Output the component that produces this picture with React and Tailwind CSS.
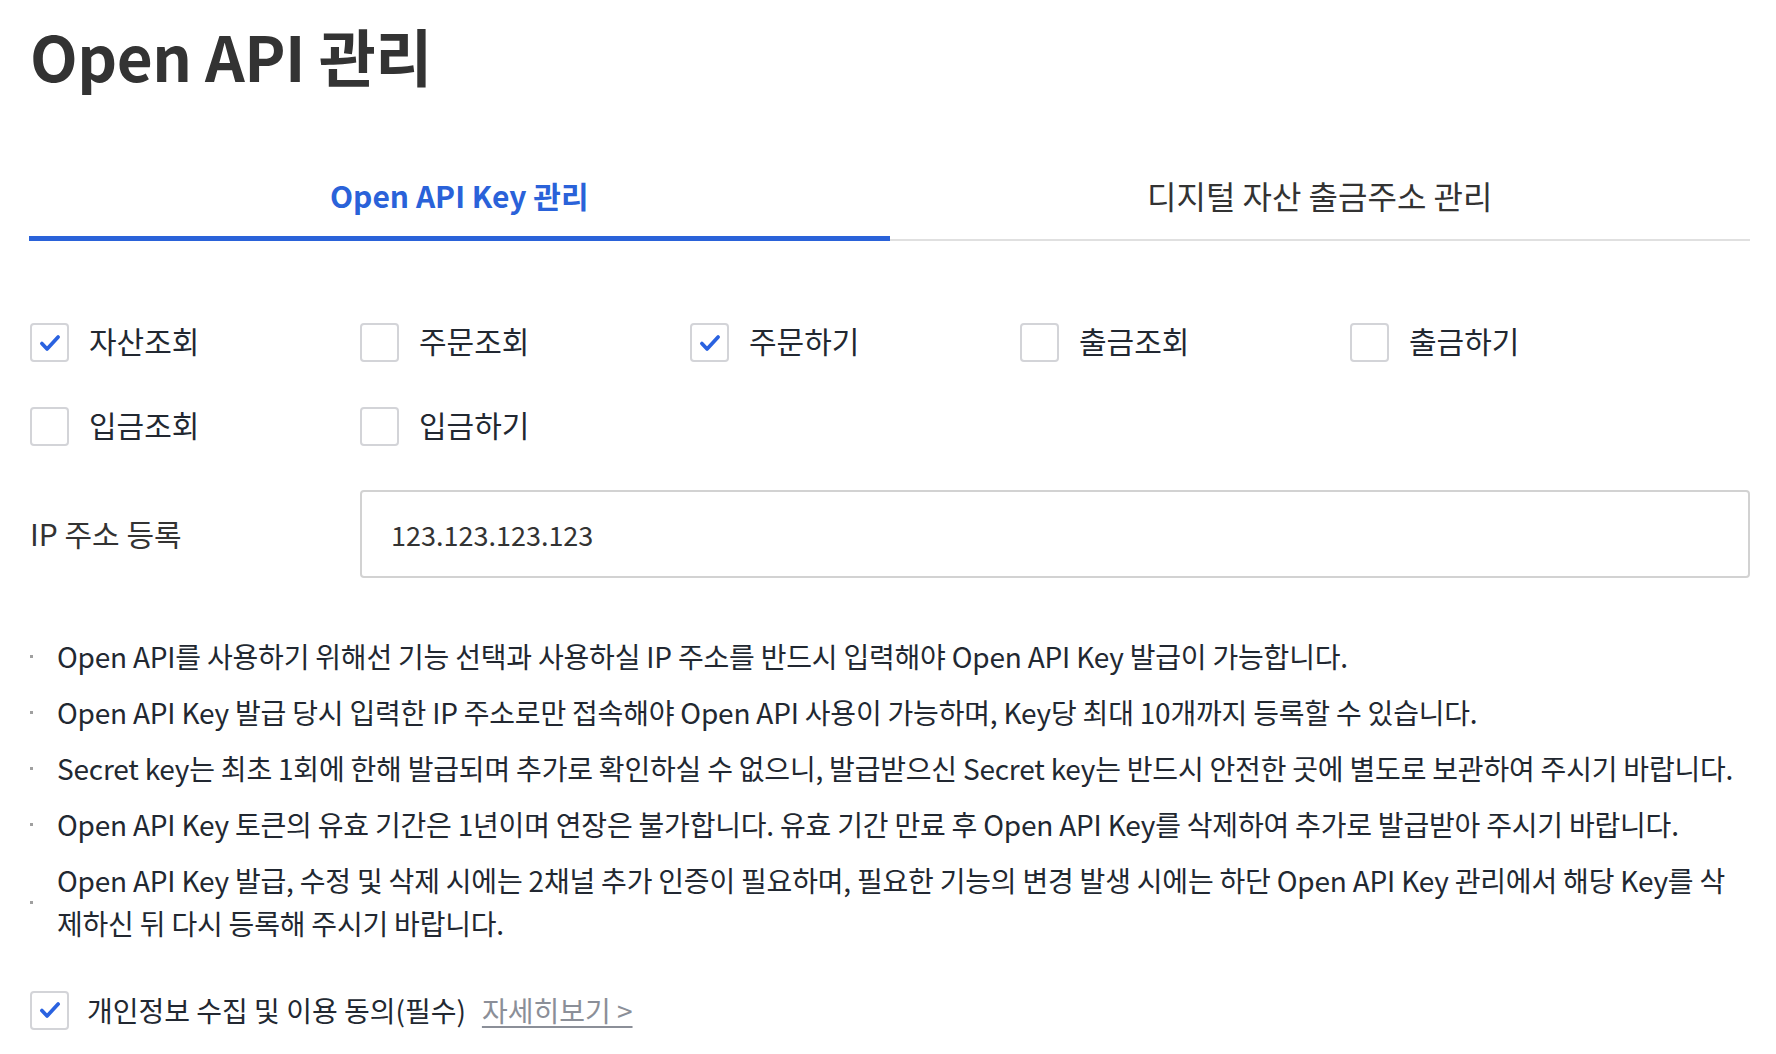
import React, { useState } from 'react';

const FONT = { fontFamily: '"Noto Sans CJK KR", "Noto Sans", sans-serif' };

const Checkbox = ({ checked, onClick }) => (
  <button
    type="button"
    onClick={onClick}
    className="w-[39px] h-[39px] shrink-0 rounded-[4px] border-2 border-[#d3d4d8] bg-white flex items-center justify-center"
  >
    {checked && (
      <svg width="26" height="26" viewBox="0 0 24 24" fill="none">
        <path d="M4.5 12.5l4.8 5L19.5 6.5" stroke="#2a62e0" strokeWidth="3.4" strokeLinecap="round" strokeLinejoin="round" />
      </svg>
    )}
  </button>
);

const permissions = ['자산조회', '주문조회', '주문하기', '출금조회', '출금하기', '입금조회', '입금하기'];

const notes = [
  'Open API를 사용하기 위해선 기능 선택과 사용하실 IP 주소를 반드시 입력해야 Open API Key 발급이 가능합니다.',
  'Open API Key 발급 당시 입력한 IP 주소로만 접속해야 Open API 사용이 가능하며, Key당 최대 10개까지 등록할 수 있습니다.',
  'Secret key는 최초 1회에 한해 발급되며 추가로 확인하실 수 없으니, 발급받으신 Secret key는 반드시 안전한 곳에 별도로 보관하여 주시기 바랍니다.',
  'Open API Key 토큰의 유효 기간은 1년이며 연장은 불가합니다. 유효 기간 만료 후 Open API Key를 삭제하여 추가로 발급받아 주시기 바랍니다.',
  'Open API Key 발급, 수정 및 삭제 시에는 2채널 추가 인증이 필요하며, 필요한 기능의 변경 발생 시에는 하단 Open API Key 관리에서 해당 Key를 삭제하신 뒤 다시 등록해 주시기 바랍니다.',
];

export default function App() {
  const [tab, setTab] = useState(0);
  const [checked, setChecked] = useState({ 자산조회: true, 주문하기: true });
  const [agree, setAgree] = useState(true);
  const [ip, setIp] = useState('123.123.123.123');

  const toggle = (name) => setChecked((prev) => ({ ...prev, [name]: !prev[name] }));

  return (
    <div className="min-h-screen bg-white pl-[30px] pr-[26px] pt-[24px]" style={FONT}>
      <h1 className="text-[62px] leading-[62px] font-bold text-[#333333] tracking-[-0.5px]">Open API 관리</h1>

      {/* Tabs */}
      <div className="mt-[94px] flex border-b-2 border-[#e0e0e0] -ml-[1px]">
        {['Open API Key 관리', '디지털 자산 출금주소 관리'].map((label, i) => (
          <button
            key={label}
            type="button"
            onClick={() => setTab(i)}
            className={`flex-1 -mb-[2px] pb-[26px] leading-[30px] border-b-[5px] ${
              tab === i
                ? 'text-[30px] font-bold text-[#2a62d9] border-[#2a62d9]'
                : 'text-[32px] text-[#333333] border-transparent'
            }`}
          >
            {label}
          </button>
        ))}
      </div>

      {/* Permissions */}
      <div className="mt-[82px] grid grid-cols-[repeat(5,330px)] gap-y-[45px]">
        {permissions.map((name) => (
          <label key={name} className="flex items-center gap-[20px] cursor-pointer">
            <Checkbox checked={!!checked[name]} onClick={() => toggle(name)} />
            <span className="text-[30px] leading-[35px] pb-[4px] text-[#222831]">{name}</span>
          </label>
        ))}
      </div>

      {/* IP */}
      <div className="mt-[44px] flex items-center">
        <div className="w-[330px] shrink-0 text-[30px] pb-[2px] text-[#333333]">IP 주소 등록</div>
        <input
          value={ip}
          onChange={(e) => setIp(e.target.value)}
          className="flex-1 h-[88px] rounded-[4px] border-2 border-[#d2d2d2] px-[29px] text-[27px] text-[#333333] outline-none"
        />
      </div>

      {/* Notes */}
      <ul className="mt-[57px] flex flex-col gap-[13px]">
        {notes.map((note) => (
          <li key={note} className="flex items-center gap-[24px]">
            <span className="w-[3px] h-[3px] shrink-0 bg-[#a0a0a0]" />
            <span className="text-[28px] leading-[43px] tracking-[-0.2px] text-[#222831]">{note}</span>
          </li>
        ))}
      </ul>

      {/* Agreement */}
      <div className="mt-[44px] flex items-center">
        <Checkbox checked={agree} onClick={() => setAgree(!agree)} />
        <span className="ml-[18px] text-[28px] text-[#222831]">개인정보 수집 및 이용 동의(필수)</span>
        <a href="#" className="ml-[16px] text-[28px] text-[#8b8f98] underline underline-offset-4">
          자세히보기 &gt;
        </a>
      </div>
    </div>
  );
}
